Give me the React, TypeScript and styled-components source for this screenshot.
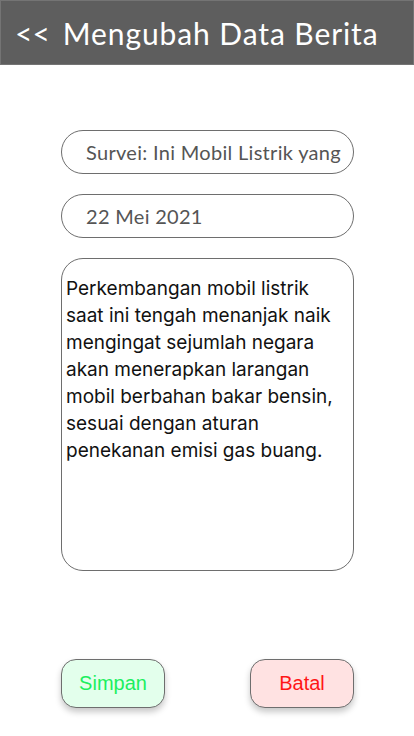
import React from "react";
import styled, { createGlobalStyle } from "styled-components";

const Global = createGlobalStyle`
  html, body { margin: 0; padding: 0; background: #ffffff; }
  body { width: 414px; height: 736px; overflow: hidden; }
`;

const Page = styled.div`
  width: 414px;
  height: 736px;
  display: flex;
  flex-direction: column;
  background: #ffffff;
`;

const Header = styled.header`
  height: 65px;
  box-sizing: border-box;
  background: #5e5e5e;
  border: 1px solid #747474;
  display: flex;
  align-items: center;
  padding-left: 14px;
  gap: 13px;
  color: #ffffff;
  font-family: "Lato", "DejaVu Sans", sans-serif;
  font-size: 30px;
`;

const Back = styled.span`
  letter-spacing: 0px;
`;

const Title = styled.h1`
  margin: 0;
  font-size: 30px;
  font-weight: 400;
  letter-spacing: 0.9px;
`;

const Form = styled.main`
  display: flex;
  flex-direction: column;
  gap: 20px;
  padding: 65px 60px 0 61px;
`;

const Field = styled.input`
  box-sizing: border-box;
  width: 293px;
  height: 44px;
  border: 1px solid #6e6e6e;
  border-radius: 22px;
  padding: 0 2px 0 24px;
  font-family: "Lato", "DejaVu Sans", sans-serif;
  font-size: 20px;
  letter-spacing: 0.3px;
  color: #555555;
  outline: none;
  background: #fff;
`;

const Area = styled.textarea`
  box-sizing: border-box;
  width: 293px;
  height: 313px;
  border: 1px solid #6e6e6e;
  border-radius: 22px;
  padding: 16px 16px 0 4px;
  font-family: "Inter", "Liberation Sans", sans-serif;
  font-size: 19px;
  line-height: 27px;
  color: #111;
  resize: none;
  outline: none;
  overflow: hidden;
`;

const Actions = styled.div`
  display: flex;
  justify-content: space-between;
  padding: 88px 60px 0 61px;
`;

const Button = styled.button<{ $tone: "ok" | "cancel" }>`
  width: 104px;
  height: 49px;
  box-sizing: border-box;
  border-radius: 15px;
  border: 1px solid #6e6e6e;
  background: ${(p) => (p.$tone === "ok" ? "#e3ffec" : "#ffe2e2")};
  color: ${(p) => (p.$tone === "ok" ? "#1cef5f" : "#ff1616")};
  font-family: "Liberation Sans", "Noto Sans", sans-serif;
  font-size: 20px;
  box-shadow: 0 4px 6px rgba(0, 0, 0, 0.22);
  cursor: pointer;
`;

export default function App() {
  return (
    <Page>
      <Global />
      <Header>
        <Back>&lt;&lt;</Back>
        <Title>Mengubah Data Berita</Title>
      </Header>
      <Form>
        <Field readOnly value="Survei: Ini Mobil Listrik yang" />
        <Field readOnly value="22 Mei 2021" />
        <Area
          readOnly
          value={
            "Perkembangan mobil listrik saat ini tengah menanjak naik mengingat sejumlah negara akan menerapkan larangan mobil berbahan bakar bensin, sesuai dengan aturan penekanan emisi gas buang."
          }
        />
      </Form>
      <Actions>
        <Button $tone="ok">Simpan</Button>
        <Button $tone="cancel">Batal</Button>
      </Actions>
    </Page>
  );
}
